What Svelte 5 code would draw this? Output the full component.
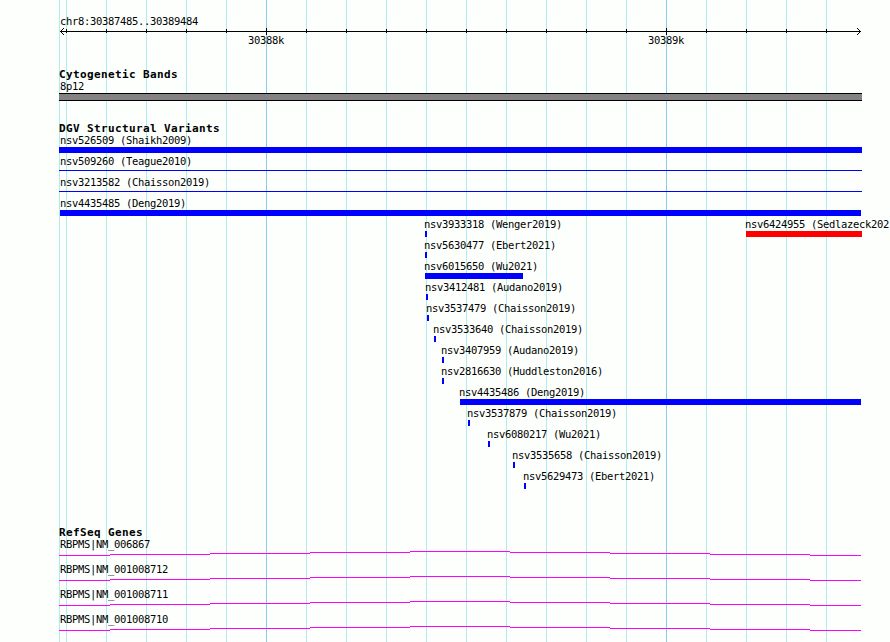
<script lang="ts">
    type Feature = {
        name: string;
        start: number;
        end: number;
        thin?: boolean;
        color?: string;
    };

    const left = 59;
    const firstTick = 66;
    const tickStep = 40;

    // every tenth tick is a major one, starting with 30388k
    const ticks = Array.from({ length: 20 }, (_, i) => ({
        x: firstTick + i * tickStep,
        major: i % 10 === 5,
    }));

    const positions = [
        { text: "30388k", x: 248 },
        { text: "30389k", x: 648 },
    ];

    const variants: Feature[][] = [
        [{ name: "nsv526509 (Shaikh2009)", start: 59, end: 862 }],
        [{ name: "nsv509260 (Teague2010)", start: 59, end: 862, thin: true }],
        [{ name: "nsv3213582 (Chaisson2019)", start: 59, end: 862, thin: true }],
        [{ name: "nsv4435485 (Deng2019)", start: 60, end: 861 }],
        [
            { name: "nsv3933318 (Wenger2019)", start: 425, end: 427 },
            { name: "nsv6424955 (Sedlazeck202", start: 746, end: 862, color: "#ff0000" },
        ],
        [{ name: "nsv5630477 (Ebert2021)", start: 425, end: 427 }],
        [{ name: "nsv6015650 (Wu2021)", start: 425, end: 523 }],
        [{ name: "nsv3412481 (Audano2019)", start: 426, end: 428 }],
        [{ name: "nsv3537479 (Chaisson2019)", start: 427, end: 429 }],
        [{ name: "nsv3533640 (Chaisson2019)", start: 434, end: 436 }],
        [{ name: "nsv3407959 (Audano2019)", start: 442, end: 444 }],
        [{ name: "nsv2816630 (Huddleston2016)", start: 442, end: 444 }],
        [{ name: "nsv4435486 (Deng2019)", start: 460, end: 861 }],
        [{ name: "nsv3537879 (Chaisson2019)", start: 468, end: 470 }],
        [{ name: "nsv6080217 (Wu2021)", start: 488, end: 490 }],
        [{ name: "nsv3535658 (Chaisson2019)", start: 513, end: 515 }],
        [{ name: "nsv5629473 (Ebert2021)", start: 524, end: 526 }],
    ];

    const genes = ["NM_006867", "NM_001008712", "NM_001008711", "NM_001008710"];

    // labels never start left of the panel
    function indent(f: Feature) {
        return f.start <= left + 1 ? 60 - f.start : -1;
    }
</script>

<div class="browser">
    <svg class="grid" width="889" height="642" shape-rendering="crispEdges">
        <rect x={left} y="0" width="1" height="642" />
        {#each ticks as tick}
            <rect class:major={tick.major} x={tick.x} y="0" width="1" height="642" />
        {/each}
    </svg>

    <section class="ruler">
        <div class="label">chr8:30387485..30389484</div>
        <svg class="axis" width="889" height="8" shape-rendering="crispEdges">
            <rect x="60" y="3" width="801" height="1" />
            {#each ticks as tick}
                <rect
                    x={tick.x}
                    y={tick.major ? 0 : 1}
                    width="1"
                    height={tick.major ? 7 : 4}
                />
            {/each}
            {#each [1, 2, 3] as d}
                <rect x={60 + d} y={3 - d} width="1" height="1" />
                <rect x={60 + d} y={3 + d} width="1" height="1" />
                <rect x={860 - d} y={3 - d} width="1" height="1" />
                <rect x={860 - d} y={3 + d} width="1" height="1" />
            {/each}
        </svg>
        <div class="positions">
            {#each positions as p}
                <span class="label" style="margin-left: {p.x}px">{p.text}</span>
            {/each}
        </div>
    </section>

    <section class="bands">
        <h2>Cytogenetic Bands</h2>
        <div class="label">8p12</div>
        <div class="band"></div>
    </section>

    <section class="variants">
        <h2>DGV Structural Variants</h2>
        {#each variants as row}
            <div class="row">
                {#each row as f (f.name)}
                    <div class="feature" style="margin-left: {f.start}px">
                        <div class="label" style="margin-left: {indent(f)}px">{f.name}</div>
                        <div
                            class="bar"
                            class:thin={f.thin}
                            style="width: {f.end - f.start}px; background-color: {f.color ?? '#0000ff'}"
                        ></div>
                    </div>
                {/each}
            </div>
        {/each}
    </section>

    <section class="genes">
        <h2>RefSeq Genes</h2>
        {#each genes as gene (gene)}
            <div class="gene">
                <div class="label">RBPMS|{gene}</div>
                <svg width="889" height="5" shape-rendering="crispEdges">
                    <path
                        d="M59 4h51v1h-51zM110 3h100v1h-100zM210 2h100v1h-100zM310 1h100v1h-100zM410 0h100v1h-100zM510 1h100v1h-100zM610 2h100v1h-100zM710 3h100v1h-100zM810 4h51v1h-51z"
                    />
                </svg>
            </div>
        {/each}
    </section>
</div>

<style>
    :global(body) {
        background-color: #fdfffc;
    }

    .browser {
        position: relative;
        width: 889px;
        height: 642px;
        overflow: hidden;
        box-sizing: border-box;
        padding-top: 15px;
        font-family: "DejaVu Sans Mono", monospace;
        color: #000;
    }

    .grid {
        position: absolute;
        top: 0;
        left: 0;
        fill: #afeeee;
    }

    .grid .major {
        fill: #87ceeb;
    }

    section {
        position: relative;
    }

    svg {
        display: block;
    }

    h2 {
        margin: 0 0 0 59px;
        height: 13px;
        font-size: 11px;
        line-height: 13px;
        letter-spacing: 0.378px;
        white-space: pre;
    }

    .label {
        height: 12px;
        margin-left: 60px;
        font-size: 10.5px;
        line-height: 10px;
        letter-spacing: -0.321px;
        white-space: pre;
    }

    .ruler {
        height: 53px;
    }

    .ruler .label {
        line-height: 12px;
    }

    .axis {
        margin-top: 1px;
    }

    .positions {
        display: grid;
        margin-top: -2px;
    }

    .positions .label {
        grid-area: 1 / 1;
    }

    .bands {
        height: 54px;
    }

    .band {
        width: 803px;
        height: 8px;
        margin-left: 59px;
        box-sizing: border-box;
        border: solid #000;
        border-width: 1px 0;
        background-color: #848284;
    }

    .variants {
        height: 404px;
    }

    .row {
        display: grid;
        height: 21px;
    }

    .feature {
        grid-area: 1 / 1;
    }

    .bar {
        height: 6px;
    }

    .thin {
        height: 1px;
        margin-top: 2px;
    }

    .gene {
        height: 25px;
    }

    .gene path {
        fill: #ff00ff;
    }
</style>
